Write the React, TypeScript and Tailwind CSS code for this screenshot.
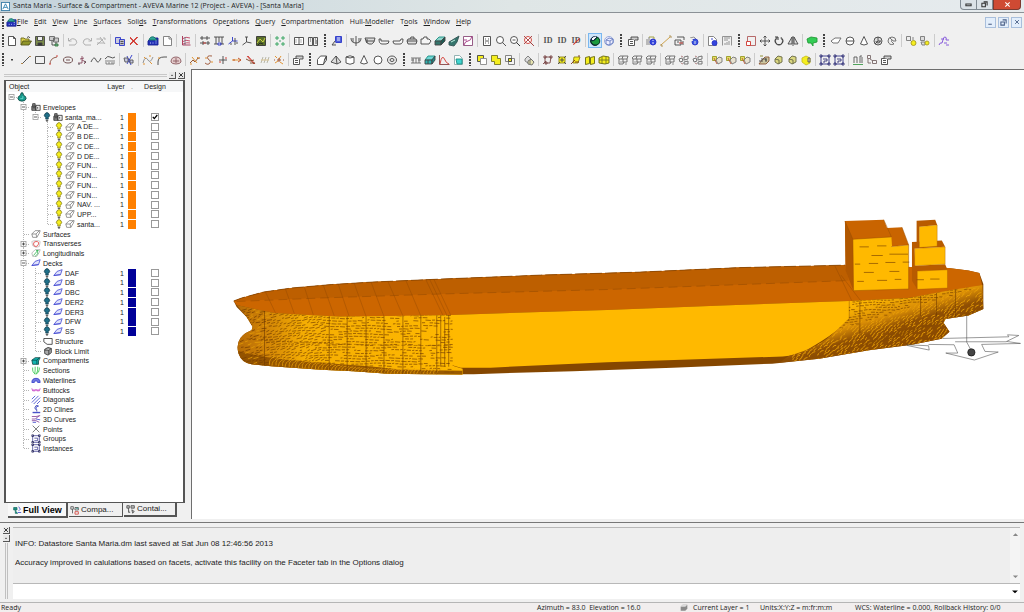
import React from "react";

type Shape = [d: string, stroke: string, fill?: string];

const K = "#444444";
const G = "#a9a9a9";
const R = "#d0342c";
const B = "#2a35c8";
const Y = "#f5ee1e";
const T = "#1c8f84";
const O = "#e08a1e";
const N = "none";

const ICONS: Record<string, Shape[]> = {
  New: [["M2.500 1.500h5l2 2v7h-7z M7.500 1.500v2h2", K, "#fff"]],
  Open: [["M1 10V3h3l1 1h4v2", "#6d6a1c", "#d9cf4a"], ["M1 10l2-4h8.500l-2.500 4z", "#55561a", "#8f9428"], ["M7 2.500q2-2 3 .5", K]],
  Save: [["M1.500 1.500h9v9h-9z", K, "#7a8a4a"], ["M3.500 1.500h5v4h-5z", K, "#eee"], ["M4 8h4v2.500h-4z", K, "#333"]],
  "Save all": [["M1.500 1.500h5v4h-5z M5.500 3h5v4h-5z", "#666", "#ccc"], ["M4 6v4h3 M8 7v3", K], ["M7 9h3v2h-3z", "#3a7a3a", "#6a9"]],
  Undo: [["M1.500 3v3h3 M2 6q3-4 7-1q2 3-1 5h-6", G]],
  Redo: [["M10.500 3v3h-3 M10 6q-3-4-7-1q-2 3 1 5h6", G]],
  Erase: [["M2 10l6-6 M1.500 4h5 M5 2l5 7 M8 3h2v2 M2 8h7", "#aaa"]],
  Copy: [["M1.500 2.500h5v6h-5z", B, "#ccd"], ["M5.500 4.500h5v6h-5z", B, "#bbc"], ["M6.500 6.500h3 M6.500 8.500h3", K]],
  Delete: [["M2 2l8 8 M10 2l-8 8", R], ["M2 3l7 7 M9 2l-7 7", R]],
  Datastore: [["M1 6l3-3h7v7h-10z", "#1a2290", "#2430b8"], ["M2 5q1-4 5-3l3 3z", "#17706a", "#30a898"], ["M3 8h1 M5.500 8h1 M8.500 6h1 M8.500 8h1", "#cfe0ff"]],
  Page: [["M2.500 1.500h6l2 2v7h-8z M8 1.500v2.500h2.500", "#777", "#fff"]],
  Plan: [["M2.500 1v9h8", "#a03050"], ["M2 4q4-3 8-1 M2 7q4-3 8-1 M3 9q4-2 7-1", "#c04060"], ["M5 2v8", "#778"]],
  Spacing: [["M1 3h10 M1 8h10 M3 1v4 M8 1v4 M4 6v4 M9 6v4", K], ["M4 8h3", R]],
  Frames: [["M1 2h10 M3 2v7 M6 2v5 M9 2v7 M1 9h4 M7 9h4", K], ["M5 8h3v2h-3z", B]],
  Axes: [["M5.500 6v-4 M5.500 6l-4 3 M5.500 6h5", B], ["M3 9h2 M8 3v7 M9 8h2", K]],
  Origin: [["M5.500 7v-5 M5.500 7l-4 3 M5.500 7l5 1 M4 2h3", K]],
  Render: [["M1.500 1.500h9v9h-9z", "#333", "#59702a"], ["M2 8l3-4 3 3 2-4", "#d8dc4a"], ["M3 10l2-2 3 1", "#222"]],
  Arrange: [["M1 3h4 M7 3h4 M1 9h4 M7 9h4 M3 1v4 M9 1v4 M3 7v4 M9 7v4", "#2da05a"], ["M5 6h2", "#339966"]],
  Columns: [["M1.500 2.500h9v7h-9z M6 2.500v7", K, "#fff"], ["M3 4v4 M8 4v4", G]],
  Book: [["M1.500 2.500h4v8h-4z M6.500 2.500h4v8h-4z", K, "#eee"], ["M3 4h1 M3 6h1 M8 4h1 M8 6h2 M8 8h2", K]],
  Hull: [["M4.500 1.500h6v6h-6z", B, "#5060d8"], ["M4 6l-3 4h4", K, "#ddd"], ["M6 3h3 M6 5h3", "#fff"]],
  Front: [["M1 3q0 5 5 5q5 0 5-5 M6 1v10 M3 3v4 M9 3v4", K]],
  Basin: [["M1 3h10l-1 4q-2 3-5 2q-3 0-4-6z", K, "#ddd"], ["M2 6h8 M3 4v4", K]],
  "Side view": [["M1 4h2v2h8q0 3-3 3h-4q-3 0-3-5", K, "#f5f5f5"]],
  "Port view": [["M1 6h7l1-2h2q0 5-3 5h-5q-2 0-2-3", K, "#f5f5f5"]],
  "Plan view": [["M2 4h8l1 2-1 3h-8l-1-3z M1 6h10 M4 4l1-2h3v2", K, "#ddd"]],
  Deckhouse: [["M1 4h2l1-2h3v2h2l2 2-2 3h-8z", K, "#f5f5f5"]],
  Slab: [["M1 6l4-4h6l-4 4z", T, "#8fd5cb"], ["M1 6h6v4h-6z", K, "#35746c"], ["M7 6l4-4v4l-4 4z", K, "#1d5952"]],
  Wedge: [["M1 7l5-3 5-3-2 6-3 4-5-1z", "#355", "#35746c"], ["M3 7l4-2", "#cfe"]],
  Graph: [["M1.500 1.500h9v9h-9z", "#8a4a78", "#fff"], ["M2 10q1-4 4-4q3 0 4-5 M2 5h3", "#a03080"]],
  "Fit page": [["M2.500 1.500h7v9h-7z", K, "#fff"], ["M4 4h1 M7 4h1 M4 6h4 M4 8h1 M7 8h1", K]],
  Zoom: [["M1.500 5a3.500 3.500 0 1 0 7 0a3.500 3.500 0 1 0-7 0", K, "#fff"], ["M7.500 7.500l3.500 3.500", K]],
  "Zoom out": [["M1.500 5a3.500 3.500 0 1 0 7 0a3.500 3.500 0 1 0-7 0 M3.500 5h3", K, "#fff"], ["M7.500 7.500l3.500 3.500", "#222"]],
  "Zoom window": [["M1.500 5a3.500 3.500 0 1 0 7 0a3.500 3.500 0 1 0-7 0", R, "#fff"], ["M7.500 7.500l3.500 3.500 M1 1l9 9 M9 1l-8 8", "#a03a3a"]],
  Shade: [["M1.500 6a4.500 4.500 0 1 0 9 0a4.500 4.500 0 1 0-9 0", "#123", "#10256a"], ["M1.500 6q4 1 7-4q4 4 1 7q-5 3-8-3", "#0a3a20", "#1c9a40"], ["M3 4q1-2 4-2l-3 3z", "#fff", "#fff"]],
  Wireframe: [["M1.500 6a4.500 4.500 0 1 0 9 0a4.500 4.500 0 1 0-9 0", "#8fa4d8", "#eef"], ["M3 5l3-2 4 1v4l-4 2-3-1z M3 5l4 1 3-2 M7 6v4", "#6a7fc0"]],
  Properties: [["M1.500 4.500h6v6h-6z M3 6.500h3 M3 8.500h3", K, "#fff"], ["M4 4v-2h7v3h-3", K, "#ccc"]],
  Info: [["M1 10v-6 M3 10v-8", "#777"], ["M4 7a3 3 0 1 0 6 0a3 3 0 1 0-6 0", B, "#3344dd"], ["M7 5v1 M7 7v2", "#fff"], ["M3 2h5v2", "#999933"]],
  Measure: [["M1 10L10 2", "#c99a3a"], ["M9 1h2v2 M1 9v2h2", "#a98a4a"]],
  Area: [["M3 2h7v3 M1 5h6v5h-6z M9 6v4 M3 7h2", K], ["M5 8h4", R]],
  Volume: [["M2 3l4-1 2 2", "#888"], ["M4 7a3 3 0 1 0 6 0a3 3 0 1 0-6 0", B, "#3c58e0"], ["M7 6v3 M2 3l3 3", "#eee"]],
  "Page info": [["M1.500 1.500h5l3 3v6h-8z", "#777", "#fff"], ["M5 8a2.500 2.500 0 1 0 5 0a2.500 2.500 0 1 0-5 0", B, "#3344dd"], ["M4 4h2", B]],
  Report: [["M1.500 10.500v-9h9v9 M3 3h6 M3 5h4 M4 10v-2 M6 10v-3 M8 10v-4", "#888"]],
  Scale: [["M2.500 1.500h8v9h-8z", "#b05a5a"], ["M1.500 6.500h4v4h-4z", R, "#fff"]],
  Move: [["M6 1v10 M1 6h10 M4.500 2.500l1.500-1.500 1.500 1.500 M4.500 9.500l1.500 1.500 1.500-1.500 M2.500 4.500L1 6l1.500 1.500 M9.500 4.500L11 6l-1.500 1.500", K]],
  Rotate: [["M4 2.500a4 4 0 1 0 4 0", "#222"], ["M2 2h3v3", "#222"], ["M4.500 3a3.500 3.500 0 1 0 3 0", "#444"]],
  Mirror: [["M6 1v10", K], ["M5 2v7h-4z M7 2v7h4z", K, "#ddd"]],
  Body: [["M1 4l4-2 6 1v4l-4 1v3l-2-3-3 0z", "#239a35", "#33cc55"]],
  Plane: [["M1 6l4-3h6l-3 5h-5z", "#666", "#fff"]],
  Sphere: [["M2 6a4 4 0 1 0 8 0a4 4 0 1 0-8 0 M2 6h8", K, "#fff"]],
  Cone: [["M6 1.500l3.500 7.500q-3.500 2-7 0z", K, "#fff"]],
  Swirl: [["M2 6a4 4 0 1 0 8 0a4 4 0 1 0-8 0 M4 6a2 2 0 1 0 4 0 M6 2v4h3 M3 9l3-3", K, "#ddd"]],
  Sweep: [["M2 6q0-4 4-4q4 0 4 4h-3q0-1-1-1q-2 1 2 4q-5 2-6-3 M4 3l2 2", "#666", "#eee"]],
  Blend: [["M1.500 1.500h4v4h-4z M5 5l2 2 M8 2v3", "#777", "#eee"], ["M6 8a2.500 2.500 0 1 0 5 0a2.500 2.500 0 1 0-5 0", "#a89a22", Y]],
  Split: [["M1.500 1.500h4v4h-4z M2 7h4v3h-3z", "#777", "#ddd"], ["M6 8a2 2 0 1 0 4 0a2 2 0 1 0-4 0", "#a89a22", Y]],
  Notes: [["M1 10q1-3 3-2q2-7 3-6q2 0 1 3h3 M3 4h3 M6 8h3 M8 10h3", "#7a4ad8"]],
  Point: [["M5 6h2 M5 5.500h2", "#333"]],
  Line: [["M2 10L10 2", K], ["M1 9.500h2 M9 2.500h2", "#b08040"]],
  Rectangle: [["M1.500 2.500h9v7h-9z", K]],
  Arc: [["M2 10q0-6 7-7", "#8a5040"], ["M8 2h2 M1 10h2", R]],
  Ellipse: [["M1.500 6a4.500 3 0 1 0 9 0a4.500 3 0 1 0-9 0 M4 6h4", "#664444"]],
  Tangent: [["M2 9h4v-7 M6 6l4 2-2 2 M4 5l4-1", "#8a4a60"], ["M8 8h2 M2 10h2", K]],
  Spline: [["M1 8q3-7 5-2q2 5 5-2", K]],
  Label: [["M1 5q3-4 5-2q3 2 5 0", K], ["M1 7h10 M2 8v2 M5 8v2 M8 8v2 M10 8v2 M2 10h8", "#777"]],
  Trim: [["M4 2l4 9 M9 1l-5 9", B], ["M1 4h4v4h-3z M7 6h3v3h-3z", "#555", "#c7c9e4"]],
  Fair: [["M1 9q2-8 5-3q2 4 5-3", "#888"], ["M2 3l2 2 M8 8l2 2 M1 10h2 M7 2h2", O]],
  Fillet: [["M2 11V8q0-5 6-5h3", K], ["M2 4h2", O]],
  Patch: [["M1 8q0-5 5-5q5 0 5 5q-1 2-5 2q-4 0-5-2", "#8a5a60", "#e4cccc"], ["M3 7h6 M6 4v5", "#8a5a60"]],
  Knot: [["M1 9l3-3 2 2 3-4h2", "#8a4a20"], ["M3 3l5 6 M1 10h2 M8 3l2 2", O]],
  Curve: [["M9 2q-6-1-4 3q4 2 1 5q-2 1-4-1", "#9a5030"], ["M2 4h2 M8 8h2", O]],
  Extend: [["M6 2v8 M2 6h8", K], ["M2 8h2 M8 4h2", R]],
  Join: [["M1 6h9", O], ["M7 4l3 2-3 2 M2 6h2", "#bb4422"]],
  Cut: [["M2 2l7 8 M3 2l7 8", R], ["M1 5l4 2 4-1 M5 9h5", "#774422"]],
  Offset: [["M2 9l2-6 M5 9l2-6 M8 9l2-6", "#b0b0a0"], ["M2 6h8", "#d9c08a"]],
  Explode: [["M2 2l2 2 M8 2l-2 3 M2 9l3-2 M7 8l3 2", O], ["M5 5h2v2h-2z M10 6h1 M1 6h1", "#994422"]],
  Cube: [["M1.500 5.500l3-3.500h6l-2 4-1 4.500h-6z M8.500 6l2-4v4l-3 4", K, "#fff"]],
  Pyramid: [["M6 2l5 6-4 2-6-2z M6 2l1 8", K, "#ddd"]],
  Cylinder: [["M2 3q4-2.500 8 0v6q-4 2.500-8 0z M2 3q4 2 8 0", K, "#fff"]],
  Ball: [["M2 6a4 4 0 1 0 8 0a4 4 0 1 0-8 0", K, "#fff"]],
  Torus: [["M1.500 6a4.500 4 0 1 0 9 0a4.500 4 0 1 0-9 0 M4 6a2 1.500 0 1 0 4 0a2 1.500 0 1 0-4 0", K, "#eee"]],
  Stiffener: [["M1 4h10 M1 9h10 M3 4v5 M6 4v5 M9 4v5 M1 6h3 M8 6h3", "#666"]],
  Tank: [["M1 6l3-4h7l-3 4z", T, "#6fd7d5"], ["M1 6h7v4h-7z", K, "#2fb0ae"], ["M8 6l3-4v4l-3 4z M4 6v4", K, "#1c8a88"]],
  Stability: [["M1.500 1v9.500h10", "#884444"], ["M2 10q2-11 5-4q1 3 4 4", R]],
  "Tank report": [["M2.500 1.500h5l3 3v6h-8z", "#8aa", "#fff"], ["M4 5h6v5h-5z", T, "#42d3d0"]],
  Union: [["M1.500 1.500h6v6h-6z", K, Y], ["M4.500 4.500h6v6h-6z", "#888", "#fff"]],
  Merge: [["M1.500 1.500h6v3h3v6h-6v-3h-3z", "#777722", Y]],
  Intersect: [["M1.500 1.500h6v6h-6z M4.500 4.500h6v6h-6z", "#777", "#f5f5f5"], ["M4.500 4.500h3v3h-3z", K, Y]],
  Solidify: [["M2 5l3-3 3 3v3l-3 1-3-2z", "#777", "#ddd"], ["M5 7l3-2 3 3-2 3-4-1z M7 6v4", "#666", "#e6e3b0"]],
  "Show nodes": [["M3 3h6l-1 6h-5z", "#774444", "#eee"], ["M1 10l3-3 M8 2h2v2h-2z M2 2h2v2h-2z M3 8h2v2h-2z", "#774444"]],
  Facet: [["M3 3h6v6h-6z", "#8c8418", Y], ["M2 2l2 2 M10 2l-2 2 M2 10l2-2 M10 10l-2-2 M5 5h2v2h-2z", K]],
  "Facet edge": [["M4 3h6l-2 6h-5z", "#8c8418", Y], ["M1 10l4-4 M8 2h2 M5 8h4", "#773322"]],
  "Facet pair": [["M1.500 3.500l4-1v7l-4 1z", "#666611", Y], ["M6.500 3.500l4-1v7l-4 1z", "#666611", Y]],
  "Facet grid": [["M1 4l4-2 6 1v6l-4 1-6-1z", "#666611", Y], ["M4 3v7 M8 3v7 M1 6h10", "#777722"]],
  Sheet: [["M1 3h4l1-1h5 M1 6h4l1-1h4 M2 9h4l2-1", "#666"], ["M3 3v7 M7 2v8 M10 2v4", "#888"]],
  "Sheet edit": [["M1 4l2-2h8l-1 3h-8z M2 5v5h4l1-2 M6 5v3h4v-3 M6 2l-1 3", "#666", "#f2f2f2"], ["M3 8h3 M8 10h2", "#888"]],
  "Sheet trim": [["M1 5l3-1 1 3-3 1z M6 3l4-1v3l-4 1z M6 8l4-1v3h-4z", "#666", "#f5f5f5"], ["M3 2l2 1 M3 9l2 1", "#aa7777"]],
  "Hide part": [["M1.500 2.500h4v4h-4z", "#999922", "#e3df66"], ["M5 6l3-3 3 1v4l-4 2z", "#777", "#e8e2d0"], ["M3 4l3 6", "#bb5533"]],
  Gear: [["M1 10l3-4 3-3h4v4l-3 3h-4z", "#885533", "#ccc6a0"], ["M3 5h5v3 M8 4v3 M1 7h4", "#444"], ["M2 2h3", "#888822"]],
  "Gear add": [["M3 5l3-3 4 1v5l-4 2-3-2z M3 5l4 1v4", "#666644", "#dad780"]],
  Bright: [["M2 4l4-2 4 2v5l-4 2-4-3z", "#c8c020", Y], ["M8 4h2v4h-2z", "#555", "#e8e0a0"]],
  Group: [["M2 2h8v8h-8z", "#333388"], ["M1 1h2v2h-2z M9 1h2v2h-2z M1 9h2v2h-2z M9 9h2v2h-2z M4 5h4v2h-3v2", "#333377"]],
  Chart: [["M2 9V3 M5 9V3 M8 9V2 M10 9V3 M2 3h3 M8 2h2", "#555"], ["M1 10.500h10", "#3c9a4a"]],
  Linked: [["M1.500 1.500h3v3h-3z M6.500 6.500h4v3h-4z M4 5l3 2 M2 5v4h3", "#776666", "#f5f5f5"]],
};

const ROW_1 =
  "New,Open,Save,Save all,|,Undo,Redo,Erase,|,Copy,Delete,|,Datastore,Page,|,Plan,|,Spacing,Frames,Axes,Origin,Render,|,Arrange,|,Columns,Book,#,Hull,|,Front,Basin,Side view,Port view,Plan view,Deckhouse,Slab,Wedge,Graph,|,Fit page,Zoom,Zoom out,Zoom window,|,ID,ID,ID off,|,Shade,Wireframe,#,Properties,|,Info,Measure,Area,Volume,|,Page info,Report,#,Scale,Move,Rotate,Mirror,|,Body,#,Plane,Sphere,Cone,Swirl,Sweep,|,Blend,Split,|,Notes".split(",");
const ROW_2 =
  "Point,Line,Rectangle,Arc,Ellipse,Tangent,Spline,Label,|,Trim,|,Fair,Fillet,Patch,|,Knot,Curve,Extend,Join,Cut,Offset,Explode,|,Properties,#,Cube,Pyramid,Cylinder,Cone,Ball,Torus,#,Stiffener,Tank,Stability,Tank report,#,Union,Merge,Intersect,|,Solidify,|,Show nodes,Facet,Facet edge,Facet pair,Facet grid,|,Sheet edit,Sheet edit,Sheet edit,|,Sheet edit,Sheet trim,Sheet trim,|,Hide part,Hide part,Hide part,|,Gear,Gear add,Gear add,Bright,|,Group,Group,|,Chart,Linked,Properties".split(",");

function Drawing({ shapes, className }: { shapes: Shape[]; className: string }) {
  return (
    <svg viewBox="0 0 12 12" className={className} aria-hidden="true">
      {shapes.map(([d, stroke, fill], i) => (
        <path key={i} d={d} stroke={stroke} fill={fill ?? N} strokeWidth="0.9" />
      ))}
    </svg>
  );
}

function Grip() {
  return (
    <svg viewBox="0 0 2 13" className="h-[13px] w-[2px] shrink-0" aria-hidden="true">
      <path d="M1 0v13" stroke="#444" strokeWidth="2" strokeDasharray="2 1" />
    </svg>
  );
}

function Toolbar({ items, name }: { items: string[]; name: string }) {
  return (
    <div role="toolbar" aria-label={name} className="flex h-[19px] items-center pl-[2px]">
      <Grip />
      <span className="w-px shrink-0" />
      {items.map((it, i) => {
        if (it === "|")
          return (
            <span key={i} className="flex w-[5px] shrink-0 justify-center">
              <span className="h-[13px] w-px bg-[#cccccc]" />
            </span>
          );
        if (it === "#")
          return (
            <span key={i} className="flex w-[10px] shrink-0 justify-center">
              <Grip />
            </span>
          );
        if (it.startsWith("ID"))
          return (
            <button key={i} aria-label={it} className="relative w-[14px] shrink-0 font-['Liberation_Serif',serif] text-[8px] leading-[14px] font-bold text-[#555]">
              ID
              {it === "ID off" && <span className="absolute top-[7px] left-[3px] h-px w-[9px] -rotate-45 bg-[#d0342c]" />}
            </button>
          );
        return (
          <button
            key={i}
            aria-label={it}
            className={
              it === "Shade"
                ? "flex h-[15px] w-[14px] shrink-0 items-center justify-center border border-[#7ab8f0] bg-[#cfe6fb]"
                : "flex h-[15px] w-[14px] shrink-0 items-center justify-center"
            }
          >
            <Drawing shapes={ICONS[it]} className="size-[12px] shrink-0" />
          </button>
        );
      })}
    </div>
  );
}

const MENUS: [string, number][] = [
  ["File", 0], ["Edit", 0], ["View", 0], ["Line", 0], ["Surfaces", 0], ["Solids", 4], ["Transformations", 0],
  ["Operations", 3], ["Query", 0], ["Compartmentation", 0], ["Hull-Modeller", 5], ["Tools", 1], ["Window", 0], ["Help", 0],
];

const BULB: Shape[] = [["M4.500 8.500v-2a3 3 0 1 1 3 0v2z", "#77701a", Y], ["M4.500 10h3 M5 11h2", "#222"]];
const BULB_OFF: Shape[] = [["M4.500 8.500v-2a3 3 0 1 1 3 0v2z", "#123a4a", "#1f6f88"], ["M4.500 10h3 M5 11h2", "#222"]];

const TREE_ICONS: Record<string, Shape[]> = {
  root: [["M1 8q0-3 3-4l1-3h2l1 3q3 1 3 4q-1 3-5 3q-4 0-5-3", "#0c3c3a", "#169a8c"], ["M4 8h3v-3", "#7fe8dc"]],
  env: [["M1 5h5v5h-5z M2 5v-3h3v3", "#222", "#888"], ["M6 4h5v6h-5z M8 6v2 M2 7h3", "#222", "#eee"]],
  solid: [["M1 6l4-4h6l-1 3-3 5h-5z M1 6h5l4-4 M6 6l1 4", "#777", "#fff"]],
  trans: [["M1 3l3-1h5l2 1-1 6-4 1-4-2z", "#bbb", "#fff"], ["M3 6q0-3 3-3q4 0 3 3q-1 3-3 3q-3 0-3-3", "#e03030"]],
  longi: [["M1 6l4-4h6l-1 3-3 5h-5z", "#aaa", "#fff"], ["M3 9l5-6v4l-3 3 M6 3h3", "#25b04a"]],
  deck: [["M1 9l4-5 6-2-2 6z M1 9l8-1", "#3a40d0", "#dfe2fb"]],
  struct: [["M1 3h10v7h-6l-4-3z", "#222", "#fff"]],
  block: [["M2 4q4-4 8-1v5l-4 3-4-2z M2 5h5l3-2 M7 5v5", "#222", "#aaa"]],
  comp: [["M1 5l4-3h6l-2 4v4h-7z", "#0c3c3a", "#12b5b0"], ["M1 5h6l3-3 M7 5v5", "#004444"]],
  sect: [["M2 3v3q0 2 2 4 M5 2v4q0 3-1 5 M8 2v4q0 4-3 5 M10 3v2q0 4-4 6", "#1fc03a"]],
  water: [["M1 9q0-5 5-5q5 0 5 5h-3q0-2-2-2q-2 0-2 2z", "#2a35c8", "#7078e0"]],
  butt: [["M1 4l1 3h3l1-2 1 2h3l1-3 M2 6h3 M7 6h3", "#c030c0"]],
  diag: [["M1 5l4-4 M1 9l8-8 M3 11l8-8 M7 11l4-4", B]],
  cline: [["M9 2h-3q-3 3 0 5q2 1 1 2 M2 10h9", "#1a25a8"], ["M9 3h-2q-2 2 0 4 M2 10.500h9", B]],
  curve: [["M1 3h5l5-1 M1 6h4l5-4 M1 8h5l4 2", "#7a3090"], ["M6 6l5 1 M2 10h4", B]],
  pts: [["M2 2l8 8 M10 2l-8 8", "#555"]],
  group: [["M2 2h8v8h-8z M4 5h4v3h-4", "#3a3a90"], ["M1 1h2v2h-2z M9 1h2v2h-2z M1 9h2v2h-2z M9 9h2v2h-2z", "#222255"]],
};

type Row = { l: number; t: string; i: string; x?: "-" | "+"; b?: "on" | "off"; c?: "orange" | "blue"; k?: boolean };
const ship = (t: string): Row => ({ l: 3, t, i: "solid", b: "on", c: "orange" });
const deck = (t: string): Row => ({ l: 2, t, i: "deck", b: "off", c: "blue" });
const top = (t: string, i: string, x?: "-" | "+"): Row => ({ l: 1, t, i, x });
const ROWS: Row[] = [
  { l: 0, t: "", i: "root", x: "-" },
  top("Envelopes", "env", "-"),
  { l: 2, t: "santa_ma...", i: "env", x: "-", b: "off", c: "orange", k: true },
  ...["A DE...", "B DE...", "C DE...", "D DE...", "FUN...", "FUN...", "FUN...", "FUN...", "NAV. ...", "UPP...", "santa..."].map(ship),
  top("Surfaces", "solid"),
  top("Transverses", "trans", "+"),
  top("Longitudinals", "longi", "+"),
  top("Decks", "deck", "-"),
  ...["DAF", "DB", "DBC", "DER2", "DER3", "DFW", "SS"].map(deck),
  { l: 2, t: "Structure", i: "struct" },
  { l: 2, t: "Block Limit", i: "block" },
  top("Compartments", "comp", "+"),
  top("Sections", "sect"),
  top("Waterlines", "water"),
  top("Buttocks", "butt"),
  top("Diagonals", "diag"),
  top("2D Clines", "cline"),
  top("3D Curves", "curve"),
  top("Points", "pts"),
  top("Groups", "group"),
  top("Instances", "group"),
];

/** True when another row of the given level follows before the branch closes. */
function continues(index: number, level: number) {
  for (let j = index + 1; j < ROWS.length; j++) {
    if (ROWS[j].l < level) return false;
    if (ROWS[j].l === level) return true;
  }
  return false;
}

function Guide({ index, level }: { index: number; level: number }) {
  const row = ROWS[index];
  const own = row.l === level;
  const more = level > 0 && continues(index, level);
  return (
    <svg viewBox="0 0 12 10" className="h-[10px] w-[12px] shrink-0" aria-hidden="true">
      {level > 0 && (more || own) && <path d={more ? "M5.500 0v10" : "M5.500 0v5"} stroke="#b5b5b5" strokeDasharray="1 1" />}
      {own && <path d="M6 5.500h6" stroke="#b5b5b5" strokeDasharray="1 1" />}
      {own && row.x && (
        <>
          <rect x="3" y="2.500" width="5" height="5" fill="#fff" stroke="#999" strokeWidth="0.8" />
          <path d={row.x === "+" ? "M4 5h3 M5.500 3.500v3" : "M4 5h3"} stroke="#333" strokeWidth="0.8" />
        </>
      )}
    </svg>
  );
}

function Tree() {
  return (
    <table className="w-full table-fixed border-collapse text-[7px] leading-[9px] text-[#222]">
      <colgroup>
        <col />
        <col className="w-[22px]" />
        <col className="w-[10px]" />
        <col className="w-[46px]" />
      </colgroup>
      <thead>
        <tr className="h-[11px] bg-[#f6f7f8]">
          <th className="pl-[3px] text-left font-normal">Object</th>
          <th className="text-center font-normal">Layer</th>
          <th className="text-center font-normal text-[#777]">.</th>
          <th className="pr-[10px] text-center font-normal">Design</th>
        </tr>
      </thead>
      <tbody>
        {ROWS.map((r, i) => (
          <tr key={i} className={i % 4 === 3 ? "h-[9px]" : "h-[10px]"}>
            <td className="p-0">
              <div className={i % 4 === 3 ? "flex h-[9px] items-center overflow-hidden whitespace-nowrap" : "flex h-[10px] items-center overflow-hidden whitespace-nowrap"}>
                {Array.from({ length: r.l + 1 }, (_, l) => (
                  <Guide key={l} index={i} level={l} />
                ))}
                {r.b && <Drawing shapes={r.b === "on" ? BULB : BULB_OFF} className="h-[10px] w-[10px] shrink-0" />}
                <Drawing shapes={TREE_ICONS[r.i]} className={r.l === 0 ? "-ml-[2px] h-[10px] w-[12px] shrink-0" : "mr-px h-[10px] w-[12px] shrink-0"} />
                <span>{r.t}</span>
              </div>
            </td>
            <td className="p-0 pr-[3px] text-right">{r.c && "1"}</td>
            <td className="p-0">
              {r.c && (
                <div
                  className={
                    r.c === "orange"
                      ? "mx-auto h-[9px] w-[8px] bg-[#ff8000]"
                      : "mx-auto h-[9px] w-[8px] bg-[#000099]"
                  }
                />
              )}
            </td>
            <td className="p-0 pr-[10px]">
              {r.c && (
                <label className="relative mx-auto -my-px flex size-[8px]">
                  <input
                    type="checkbox"
                    defaultChecked={r.k}
                    aria-label={"Design " + r.t}
                    className="peer size-[8px] appearance-none border border-[#999] bg-white"
                  />
                  <svg viewBox="0 0 8 8" className="pointer-events-none absolute inset-0 hidden size-[8px] peer-checked:block">
                    <path d="M1.800 3.800l1.500 1.800 3-3.600" fill="none" stroke="#000" strokeWidth="1.300" />
                  </svg>
                </label>
              )}
            </td>
          </tr>
        ))}
      </tbody>
    </table>
  );
}

/** Repeatable pseudo-random value in 0..1. */
const noise = (a: number, b: number) => {
  const v = Math.sin(a * 12.9898 + b * 78.233) * 43758.5453;
  return v - Math.floor(v);
};

function bowMesh() {
  let fine = "";
  let heavy = "";
  let light = "";
  for (let r = 0; r < 24; r++) {
    const y0 = 311 + r * 2.7;
    let x = 236 + noise(r, 1) * 4;
    while (x < 450) {
      const len = 1.8 + noise(x, r) * 3.6;
      const curl = x < 320 ? -1.8 + noise(r, x) * 1.4 : -0.4 + noise(x, r) * 0.8;
      const y = y0 + Math.sin(x / 9 + r / 3) * 0.6;
      const seg = `M${x.toFixed(1)} ${y.toFixed(1)}l${len.toFixed(1)} ${curl.toFixed(1)}`;
      const dense = 0.92 - Math.max(0, x - 265) / 600;
      const pick = noise(x + 3, r + 5);
      if (x < 268) {
        if (pick < 0.55) heavy += seg;
        else if (pick > 0.8) light += seg;
      } else if (pick < dense) {
        fine += seg;
      }
      x += len + 1.2;
    }
  }
  for (let k = 0; k < 26; k++) {
    const x = 268 + k * 6.6;
    const y = 362 + Math.min(10, k * 0.7);
    light += `M${x} ${y + 4}q-1-6 5-${(8 - k * 0.15).toFixed(1)}M${x + 2.5} ${y + 5}q0-5 5-7`;
  }
  return { fine, heavy, light };
}

function sternMesh() {
  let fine = "";
  let light = "";
  for (let r = 0; r < 34; r++) {
    let x = 792 + noise(r, 4) * 3;
    while (x < 986) {
      const y = 286 + r * 2.5 - (x - 880) * 0.06 + Math.sin(x / 7) * 0.8;
      const len = 1.8 + noise(x, r) * 2.4;
      const deep = y + (x - 850) * 0.3 > 327;
      if (!deep) {
        if (noise(x, r + 9) < 0.8) fine += `M${x.toFixed(1)} ${y.toFixed(1)}l${len.toFixed(1)} ${(noise(r, x) - 0.6).toFixed(1)}`;
      } else if (noise(x, r + 9) < 0.7) {
        light += `M${x.toFixed(1)} ${y.toFixed(1)}q0.300 -2 ${(len - 0.4).toFixed(1)} ${(-1.8 - noise(r, x)).toFixed(1)}`;
      }
      x += len + 1.2;
    }
  }
  return { fine, light };
}

const HULL =
  "M232 302L240 299L262 293L290 289L330 285.500L371 283L440 280L540 276L640 273L740 268.500L846 266L950 269L970 271.500L981 274L985 285L985 310L970 316.500L947 320L945 324L951 333L943 340L913 346L870 351.500L820 360L773 365L673 369L573 372.500L473 375.500L427 375.500L387 375L353 372.500L320 371L270 367.500L250 365.500Q240 364 237 355T239 339Q243 334 250 331.500L251 328L245 318L235 308Z";
const BOW = "M235 306L253 310L273 314L307 316L337 317.500L387 317L452 316L452 367L462 370L462 376L427 375.500L387 375L353 372.500L320 371L270 367.500L250 365.500Q240 364 237 355T239 339Q243 334 250 331.500L251 328L245 318Z";
const STERN = "M850 302L910 299L950 291.500L984 286L985 310L970 316.500L947 320L945 324L951 333L943 340L913 346L870 351.500L820 360L780 364L790 357Q820 349 836 333T850 320Z";

function Ship() {
  const bow = bowMesh();
  const stern = sternMesh();
  return (
    <svg viewBox="192 70 832 451" className="size-full" role="img" aria-label="Shaded view of the Santa Maria hull">
      <defs>
        <linearGradient id="bowFill" x1="0" x2="1" y1="0" y2="0">
          <stop offset="0" stopColor="#b56a06" />
          <stop offset="0.12" stopColor="#cf8207" />
          <stop offset="0.300" stopColor="#f5ae03" />
          <stop offset="1" stopColor="#ffb900" />
        </linearGradient>
        <linearGradient id="sternFill" gradientUnits="userSpaceOnUse" x1="880" y1="300" x2="895" y2="350">
          <stop offset="0" stopColor="#fbb502" />
          <stop offset="0.350" stopColor="#d98d06" />
          <stop offset="0.600" stopColor="#8f4f03" />
          <stop offset="1" stopColor="#8a4a00" />
        </linearGradient>
        <clipPath id="bowClip"><path d={BOW} /></clipPath>
        <clipPath id="sternClip"><path d={STERN} /></clipPath>
      </defs>

      <path d={HULL} fill="#854700" />
      <path d="M232 302L240 299L262 293L290 289L330 285.500L371 283L440 280L540 276L640 273L740 268.500L846 266L950 269L970 271.500L981 274L984 287L950 292L910 299L850 302L723 306.500L607 311L450 316L387 317.500L337 317.500L307 316L273 314L253 310L235 306Z" fill="#cc6600" />
      <path d="M232 302L240 299L262 293L290 289L330 285.500L371 283L440 280L540 276L640 273L740 268.500L846 266L850 281.500L607 290.500L440 295L387 296.500L320 299Z" fill="#bd5f00" />
      <path d="M235 302.500L320 299L440 295L607 290.500L850 281.500" fill="none" stroke="#9a4d00" strokeWidth="0.600" strokeDasharray="9 5" />
      <path d="M232 302L240 299L262 293L290 289L330 285.500L371 283L440 280L540 276L640 273L740 268.500L846 266" fill="none" stroke="#7d3f00" strokeWidth="0.700" strokeDasharray="12 3" />
      <path d="M264 293L274 314M284 290L293 315M303 288L312 316M322 286L333 317M337 285L348 317.500M353 284L365 317.500M370 283L383 317.500M387 282.500L402 317M405 281.500L420 317M425 280.500L442 316M433 280L450 316M429 280.500L446 316M836 267L853 302M842 276L862 302" stroke="#8a4600" strokeWidth="0.600" opacity="0.600" />

      <path d="M450 316L607 311L723 306.500L850 302V320Q846 325 836 333T803 354Q790 358 777 358L607 363.500L490 369L460 369L450 366Z" fill="#ffb900" />

      <path d={BOW} fill="url(#bowFill)" />
      <g clipPath="url(#bowClip)" fill="none">
        <path d="M236 352Q262 360 320 364T400 371L462 372V378H236Z" fill="#8f5000" opacity="0.900" />
        <path d={bow.fine} stroke="#8a4f00" strokeWidth="0.800" />
        <path d={bow.heavy} stroke="#7a4200" strokeWidth="0.800" />
        <path d={bow.light} stroke="#e39b08" strokeWidth="0.800" />
        <path d="M263 310v58M328 316v56M346 316v57M365 316v60M383 316v60M402 316v60M420 316v60M436 316v60M440 316v52M444 318v50M448 316v52" stroke="#6d3a00" strokeWidth="0.600" />
        <path d="M245 340Q300 346 450 347" stroke="#7a4200" strokeWidth="0.500" strokeDasharray="4 2" />
      </g>

      <path d={STERN} fill="url(#sternFill)" />
      <g clipPath="url(#sternClip)" fill="none">
        <path d={stern.fine} stroke="#8a4f00" strokeWidth="0.800" />
        <path d={stern.light} stroke="#e79f08" strokeWidth="0.900" />
        <path d="M850 302v20M861 302v34M922 297v20M938 294v24M957 290v28" stroke="#6d3a00" strokeWidth="0.600" />
        <path d="M780 366Q840 352 870 346T985 308V320L947 322L900 332L850 350Z" fill="#854700" opacity="0.350" />
      </g>

      <g transform="translate(770 200) scale(0.3333)">
        <path d="M228 65L345 61L355 86L400 84L420 137L368 142L254 275L230 210Z" fill="#c96400" />
        <path d="M228 65L252 120L254 275L230 215Z" fill="#b05700" />
        <path d="M252 120L368 113L370 142L420 137L420 270L254 275Z" fill="#ffb900" />
        <path d="M228 65L252 120L368 113L345 61M368 142L420 137L400 84M252 120L254 275L420 270V137" fill="none" stroke="#9a4f00" strokeWidth="1.500" />
        <path d="M272 143h28M325 140h28M308 169h34M362 165h56M258 195h16M300 193h28M350 190h30M402 189h20M285 220h30M362 217h30M265 247h20M325 244h30M378 241h20" stroke="#7d4500" strokeWidth="2" />
        <path d="M430 128L520 124L530 143L438 148L440 200L530 195L537 212L446 216V271L430 245Z" fill="#b85b00" />
        <path d="M444 64L500 61L506 77L452 82V145L444 127Z" fill="#b85b00" />
        <path d="M452 82L506 77V141L452 145ZM438 148L530 143V195L438 200ZM446 216L537 212V267L446 271Z" fill="#ffb900" stroke="#9a5000" strokeWidth="1" />
        <path d="M444 242h22M485 240h28" stroke="#7d4500" strokeWidth="2" />
        <path d="M595 350V430L610 458M522 419L722 414L718 408L752 410L715 428L757 434L640 437L650 458L690 460L618 484L532 463L568 463L557 438L480 437M560 429H715M415 440L482 454L480 441M415 438L480 441" fill="none" stroke="#555" strokeWidth="1.800" />
        <circle cx="609" cy="461" r="11" fill="#444" stroke="#111" strokeWidth="2" />
      </g>
    </svg>
  );
}

const MDI = "flex h-[11px] w-[11px] items-center justify-center border border-[#a9bfdc] bg-[#e3eefb]";
const MINI = "flex size-[7px] items-center justify-center border-r border-b border-[#555] bg-[#e8e8e8]";

function Glyph({ d, className }: { d: string; className: string }) {
  return (
    <svg viewBox="0 0 8 8" className={className} aria-hidden="true">
      <path d={d} fill="none" stroke="currentColor" strokeWidth="1.200" />
    </svg>
  );
}

const CROSS = "M1.500 1.500l5 5M6.500 1.500l-5 5";

export default function App() {
  return (
    <div className="flex h-screen flex-col overflow-hidden bg-[#f0f0f0] font-['Open_Sans',sans-serif] text-[7px] leading-[10px] text-[#222]">
      <header className="flex h-[13px] shrink-0 items-center border-b border-[#8b9196] bg-linear-to-r from-[#c3d3db] via-[#dfe6e6] to-[#e6ebee] pl-px">
        <svg viewBox="0 0 10 10" className="mr-[3px] size-[9px]" aria-hidden="true">
          <rect x="0.500" y="0.500" width="9" height="9" fill="#fff" stroke="#3b7fa8" />
          <path d="M2 8L5 2l3 6M3.500 6h3" fill="none" stroke="#2b7fae" />
        </svg>
        <h1>Santa Maria - Surface &amp; Compartment - AVEVA Marine 12 (Project - AVEVA) - [Santa Maria]</h1>
        <div className="ml-auto flex self-start pr-[3px] text-[#333]">
          <button aria-label="Minimize" className="flex h-[10px] w-[17px] items-center justify-center rounded-bl-sm border border-t-0 border-[#808a92] bg-[#dbe2e7]">
            <Glyph d="M1 3.500h6v2h-6z" className="size-[7px]" />
          </button>
          <button aria-label="Restore" className="flex h-[10px] w-[16px] items-center justify-center border-r border-b border-[#808a92] bg-[#dbe2e7]">
            <Glyph d="M1 2.500h4v4h-4zM3 1h4v4" className="size-[7px]" />
          </button>
          <button aria-label="Close" className="flex h-[10px] w-[28px] items-center justify-center rounded-br-sm border border-t-0 border-[#7c3a30] bg-[#cf4a33] text-white">
            <Glyph d={CROSS} className="size-[7px]" />
          </button>
        </div>
      </header>

      <div className="flex h-[18px] shrink-0 items-center pl-[2px]">
        <Grip />
        <Drawing shapes={ICONS.Datastore} className="ml-[2px] size-[11px]" />
        <nav aria-label="Main menu" className="flex gap-[6px]">
          {MENUS.map(([m, u]) => (
            <button key={m}>
              {m.slice(0, u)}
              <span className="underline">{m[u]}</span>
              {m.slice(u + 1)}
            </button>
          ))}
        </nav>
        <div className="ml-auto flex gap-[2px] pr-[2px] text-[#4a5f86]">
          <button aria-label="Minimize document" className={MDI}><Glyph d="M1.500 6h4" className="size-[7px]" /></button>
          <button aria-label="Restore document" className={MDI}><Glyph d="M1 3.500h4v3.500h-4zM3 1h4v4" className="size-[7px]" /></button>
          <button aria-label="Close document" className={MDI}><Glyph d={CROSS} className="size-[6px]" /></button>
        </div>
      </div>

      <Toolbar items={ROW_1} name="Standard" />
      <Toolbar items={ROW_2} name="Drawing" />

      <main className="flex min-h-0 flex-1">
        <aside className="flex w-[191px] shrink-0 flex-col pr-[6px] pb-[4px] pl-[4px] font-['Liberation_Sans',sans-serif]">
          <div className="flex h-[11px] shrink-0 items-center gap-[2px] pt-px">
            <span className="h-[3px] flex-1 border-y border-[#c8c8c8]" />
            <button aria-label="Pin panel" className={MINI}><Glyph d="M3 4.500h2" className="size-[6px]" /></button>
            <button aria-label="Close panel" className={MINI}><Glyph d={CROSS} className="size-[6px]" /></button>
          </div>
          <div className="min-h-0 flex-1 overflow-hidden border-x-2 border-y border-[#555] bg-white">
            <Tree />
          </div>
          <div role="tablist" className="flex h-[15px] shrink-0 items-start gap-px pr-[8px] pl-[4px] text-[8px] leading-[12px]">
            <button role="tab" aria-selected="true" className="flex h-[15px] w-[60px] items-center border-r-2 border-b-2 border-[#555] bg-[#f8f8f8] pl-[4px] text-[9px] font-bold whitespace-nowrap text-black">
              <Drawing shapes={[["M2 3h4v3h-4z M4 6v4h3", "#1c6f64", "#1c8f84"], ["M8 2l2 3-2 2 M7 9h4", B]]} className="mr-px size-[10px]" />
              Full View
            </button>
            <button role="tab" aria-selected="false" className="flex h-[14px] w-[54px] items-center border-r border-b border-[#555] pl-px">
              <Drawing shapes={[["M1 2h3v3h-3z M3 5v5 M6 3h4v3h-4z", K], ["M6 8h4v3h-4z", R], ["M7 4h3", T]]} className="mr-px size-[10px]" />
              Compa...
            </button>
            <button role="tab" aria-selected="false" className="flex h-[14px] w-[53px] items-center border-r-2 border-b-2 border-[#555] pl-[2px]">
              <Drawing shapes={[["M1 2h3v3h-3z M3 5v5h2 M6 2h4v3h-4z M7 7l3 2-2 2z", K, "#bbb"]]} className="mr-px size-[10px]" />
              Contai...
            </button>
          </div>
        </aside>
        <section aria-label="Model view" className="mb-[3px] min-w-0 flex-1 border-t border-l border-[#6e6e6e] bg-white">
          <Ship />
        </section>
      </main>

      <section aria-label="Messages" className="flex h-[81px] shrink-0 border-y border-b-[#b5b5b5] border-t-[#777] pt-[4px] pr-[4px] pb-[3px] font-['Liberation_Sans',sans-serif]">
        <div className="flex w-[13px] shrink-0 flex-col items-center gap-px">
          <button aria-label="Close messages" className={MINI}><Glyph d={CROSS} className="size-[6px]" /></button>
          <button aria-label="Pin messages" className={MINI}><Glyph d="M3 4.500h2" className="size-[6px]" /></button>
          <span className="w-[3px] flex-1 border-x border-[#c0c0c0]" />
        </div>
        <div className="flex min-w-0 flex-1 flex-col">
          <div className="flex min-h-0 flex-1 border-y border-[#b8b8b8] bg-[#eeeeee]">
            <div className="flex-1 pt-[11px] pl-[2px] text-[8px]">
              <p>INFO: Datastore Santa Maria.dm last saved at Sat Jun 08 12:46:56 2013</p>
              <p className="mt-[9px]">Accuracy improved in calulations based on facets, activate this facility on the Faceter tab in the Options dialog</p>
            </div>
            <div className="flex w-[10px] flex-col justify-between bg-[#f4f4f4] py-[3px] text-[#888]">
              <button aria-label="Scroll up"><Glyph d="M2.500 5l1.500-1.500 1.500 1.500z" className="mx-auto size-[7px]" /></button>
              <button aria-label="Scroll down"><Glyph d="M2.500 3.500l1.500 1.500 1.500-1.500z" className="mx-auto size-[7px]" /></button>
            </div>
          </div>
          <div className="flex h-[15px] shrink-0 items-center bg-white">
            <input aria-label="Command" className="h-full min-w-0 flex-1 bg-transparent px-1 outline-none" />
            <button aria-label="Command history" className="w-[10px] text-black"><Glyph d="M2.500 3l1.500 1.500 1.500-1.500z" className="mx-auto size-[8px]" /></button>
          </div>
        </div>
      </section>

      <footer className="flex h-[9px] shrink-0 items-end bg-[#f1eeee] pr-[24px] pl-px leading-[8px] whitespace-nowrap">
        <span className="flex-1">Ready</span>
        <span className="w-[142px]">Azimuth = 83.0&nbsp; Elevation = 16.0</span>
        <span className="flex w-[81px] gap-[4px]">
          <svg viewBox="0 0 12 12" className="h-[8px] w-[10px]" aria-hidden="true">
            <path d="M1 4l3-3h7v6l-3 3h-7z" fill="#8a8a8a" />
            <path d="M1 4l3-3h7l-3 3z" fill="#ddd" />
          </svg>
          Current Layer = 1
        </span>
        <span className="w-[95px]">Units:X:Y:Z = m:fr:m:m</span>
        <span className="w-[145px]">WCS: Waterline = 0.000, Rollback History: 0/0</span>
      </footer>
    </div>
  );
}
